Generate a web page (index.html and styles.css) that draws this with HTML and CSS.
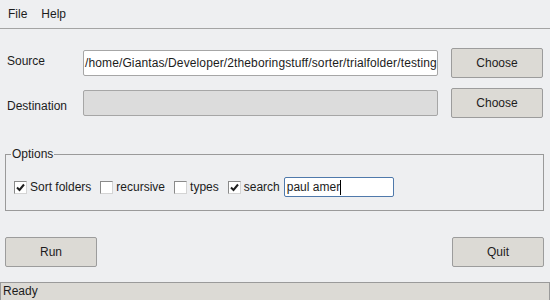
FILE: index.html
```html
<!DOCTYPE html>
<html lang="en">
<head>
    <meta charset="UTF-8">
    <meta name="viewport" content="width=device-width, initial-scale=1.0">
    <title>Sorter</title>
    <link rel="stylesheet" href="styles.css">
</head>
<body>
    <div class="app">
        <nav class="menubar">
            <span class="menu-item">File</span>
            <span class="menu-item">Help</span>
        </nav>

        <main class="content">
            <div class="path-row">
                <label class="path-label label-up">Source</label>
                <div class="field">/home/Giantas/Developer/2theboringstuff/sorter/trialfolder/testing</div>
                <button class="btn">Choose</button>
            </div>

            <div class="path-row">
                <label class="path-label label-down">Destination</label>
                <div class="field field-disabled"></div>
                <button class="btn">Choose</button>
            </div>

            <fieldset class="options">
                <legend>Options</legend>
                <div class="option-row">
                    <span class="option"><span class="check checked"><svg viewBox="0 0 11 11" width="11" height="11"><path d="M2 5.5 L4.5 8 L9 2.5" fill="none" stroke="#1e1e1e" stroke-width="2"/></svg></span>Sort folders</span>
                    <span class="option"><span class="check"></span>recursive</span>
                    <span class="option"><span class="check"></span>types</span>
                    <span class="option"><span class="check checked"><svg viewBox="0 0 11 11" width="11" height="11"><path d="M2 5.5 L4.5 8 L9 2.5" fill="none" stroke="#1e1e1e" stroke-width="2"/></svg></span>search</span>
                    <div class="search-box">paul amer<span class="caret"></span></div>
                </div>
            </fieldset>

            <div class="actions">
                <button class="btn btn-action">Run</button>
                <button class="btn btn-action">Quit</button>
            </div>
        </main>

        <footer class="status">Ready</footer>
    </div>
</body>
</html>
```

FILE: styles.css
```css
* {
    margin: 0;
    padding: 0;
    box-sizing: border-box;
    font-family: 'Liberation Sans', Arial, sans-serif;
}

body {
    background-color: #eeeff1;
    color: #1c1c1c;
    font-size: 12px;
    overflow: hidden;
}

.app {
    height: 100vh;
    display: flex;
    flex-direction: column;
}

/* barra de menu */
.menubar {
    height: 29px;
    display: flex;
    align-items: center;
    gap: 14px;
    padding-left: 8px;
    border-bottom: 1px solid #a4a4a4;
}

.content {
    padding: 19px 6px 0 5px;
}

.path-row {
    display: grid;
    grid-template-columns: 63px 1fr 92px;
    column-gap: 13px;
    align-items: center;
    height: 30px;
    padding: 0 1px 0 2px;
    margin-bottom: 10px;
}

.label-up {
    margin-bottom: 4px;
}

.label-down {
    margin-top: 6px;
}

.field {
    height: 26px;
    line-height: 24px;
    padding-left: 1px;
    background-color: #ffffff;
    border: 1px solid #a6a6a6;
    border-radius: 2px;
    white-space: nowrap;
    overflow: hidden;
    letter-spacing: 0.12px;
}

.field-disabled {
    background-color: #dcdcdc;
}

.btn {
    height: 30px;
    background-color: #dcdad5;
    color: #1c1c1c;
    border: 1px solid #9c9c9c;
    border-radius: 2px;
    font-size: 12px;
}

/* grupo de opcoes */
.options {
    margin-top: 29px;
    border: 1px solid #9a9a9a;
    padding: 0 0 0 5px;
}

.options legend {
    padding: 0 1px;
    line-height: 14px;
}

.option-row {
    display: flex;
    align-items: center;
    height: 20px;
    margin: 16px 0 13px 3px;
}

.option {
    display: flex;
    align-items: center;
    gap: 3px;
    margin-right: 9px;
}

.option:last-of-type {
    margin-right: 4px;
}

.check {
    width: 13px;
    height: 13px;
    background-color: #ffffff;
    border: 1px solid;
    border-color: #8a8a8a #d4d4d4 #d4d4d4 #8a8a8a;
    display: flex;
}

.search-box {
    width: 110px;
    height: 20px;
    line-height: 18px;
    padding-left: 2px;
    background-color: #ffffff;
    border: 1px solid #4f79ab;
    border-radius: 2px;
    display: flex;
    align-items: center;
}

.caret {
    width: 1px;
    height: 15px;
    background-color: #000000;
}

.actions {
    display: flex;
    justify-content: space-between;
    margin-top: 26px;
}

.btn-action {
    width: 92px;
}

.status {
    margin-top: auto;
    height: 18px;
    line-height: 17px;
    padding-left: 2px;
    background-color: #dcdad5;
    border: 1px solid #9a9a9a;
    border-bottom: none;
}
```
